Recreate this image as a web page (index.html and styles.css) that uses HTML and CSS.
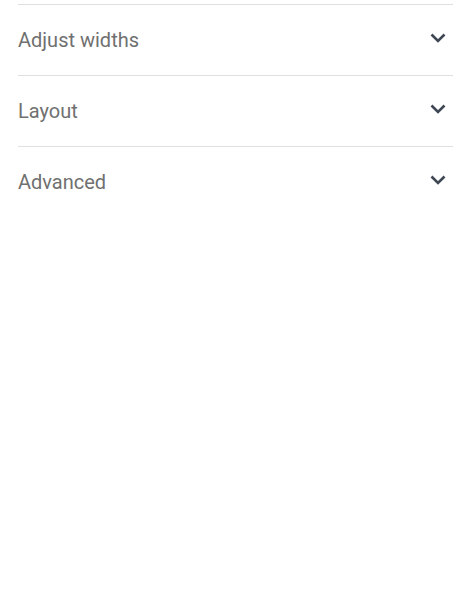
FILE: index.html
```html
<!DOCTYPE html>
<html lang="en">
<head>
<meta charset="utf-8">
<title>Settings</title>
<link rel="stylesheet" href="styles.css">
</head>
<body>
<div class="panel">
  <div class="section">
    <span class="label">Adjust widths</span>
    <svg class="chev" width="16" height="10" viewBox="0 0 16 10"><polyline points="1.5,1.5 8,8 14.5,1.5" fill="none" stroke="#3f4754" stroke-width="2.6"/></svg>
  </div>
  <div class="section">
    <span class="label">Layout</span>
    <svg class="chev" width="16" height="10" viewBox="0 0 16 10"><polyline points="1.5,1.5 8,8 14.5,1.5" fill="none" stroke="#3f4754" stroke-width="2.6"/></svg>
  </div>
  <div class="section">
    <span class="label">Advanced</span>
    <svg class="chev" width="16" height="10" viewBox="0 0 16 10"><polyline points="1.5,1.5 8,8 14.5,1.5" fill="none" stroke="#3f4754" stroke-width="2.6"/></svg>
  </div>
</div>
</body>
</html>
```
FILE: styles.css
```css
html, body {
  margin: 0;
  padding: 0;
  background: #ffffff;
}
body {
  font-family: Roboto, "Liberation Sans", sans-serif;
}
.panel {
  padding: 4px 19px 0 18px;
}
.section {
  display: flex;
  align-items: center;
  justify-content: space-between;
  height: 70px;
  border-top: 1px solid #e0e0e0;
}
.label {
  font-size: 20px;
  color: #707070;
}
.chev {
  display: block;
  margin-right: 7px;
  margin-top: -4px;
}
```
